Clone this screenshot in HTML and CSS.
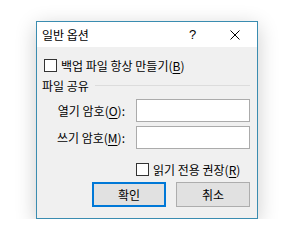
FILE: index.html
```html
<!DOCTYPE html>
<html>
<head>
    <meta charset="UTF-8">
    <title>일반 옵션</title>
    <link rel="stylesheet" href="styles.css">
</head>
<body>
<div class="dialog">
    <div class="title-bar">
        <span class="title">일반 옵션</span>
        <span class="help">?</span>
        <svg class="close" width="10" height="10" viewBox="0 0 10 10">
            <path d="M0.5 0.5 L9.5 9.5 M9.5 0.5 L0.5 9.5" stroke="#000" stroke-width="1" fill="none"/>
        </svg>
    </div>
    <div class="dialog-body">
        <label class="check-row">
            <span class="checkbox"></span>
            <span>백업 파일 항상 만들기(<u>B</u>)</span>
        </label>
        <div class="group-title">
            <span>파일 공유</span>
            <span class="group-line"></span>
        </div>
        <div class="field-row first-field">
            <span class="field-label">열기 암호(<u>O</u>):</span>
            <span class="text-box"></span>
        </div>
        <div class="field-row">
            <span class="field-label">쓰기 암호(<u>M</u>):</span>
            <span class="text-box"></span>
        </div>
        <label class="check-row readonly-row">
            <span class="checkbox"></span>
            <span>읽기 전용 권장(<u>R</u>)</span>
        </label>
        <div class="button-row">
            <button class="dlg-button default" type="button">확인</button>
            <button class="dlg-button" type="button">취소</button>
        </div>
    </div>
</div>
</body>
</html>
```
FILE: styles.css
```css
/* Page */
body {
    margin: 0;
    padding: 21px 0 0 36px;
    background-color: #fff;
    font-family: "Noto Sans CJK KR", "Noto Sans", sans-serif;
    font-size: 12px;
    color: #000;
}

/* Dialog window */
.dialog {
    box-sizing: border-box;
    width: 222px;
    height: 198px;
    border: 1px solid #3a8cb0;
    background-color: #f0f0f0;
    box-shadow: 0 5px 20px rgba(0, 0, 0, 0.2);
}

/* Title bar */
.title-bar {
    display: flex;
    align-items: center;
    height: 25px;
    background-color: #fff;
    padding-left: 5px;
}

.title {
    flex: 1;
}

.help {
    width: 12px;
    margin-right: 29px;
    font-family: "Liberation Sans", sans-serif;
    font-size: 13px;
}

.close {
    margin-right: 17px;
}

/* Body of the dialog */
.dialog-body {
    padding: 10px 7px 0 7px;
}

u {
    text-decoration-thickness: 1px;
    text-underline-offset: 2px;
}

/* Checkboxes */
.check-row {
    display: flex;
    align-items: center;
    gap: 4px;
    height: 16px;
}

.checkbox {
    box-sizing: border-box;
    width: 13px;
    height: 13px;
    border: 1px solid #333;
    background-color: #fff;
}

/* Group header */
.group-title {
    display: flex;
    align-items: center;
    gap: 6px;
    margin: 3px 0 0 -2px;
    height: 18px;
}

.group-line {
    flex: 1;
    height: 1px;
    background-color: #dcdcdc;
}

/* Password fields */
.field-row {
    display: flex;
    align-items: center;
    justify-content: flex-end;
    gap: 11px;
    margin-top: 4px;
}

.field-row.first-field {
    margin-top: 5px;
}

.field-label {
    white-space: nowrap;
}

.text-box {
    box-sizing: border-box;
    width: 114px;
    height: 23px;
    border: 1px solid #ababab;
    background-color: #fff;
}

/* Read-only checkbox */
.readonly-row {
    margin-top: 12px;
    margin-left: 92px;
}

/* Buttons */
.button-row {
    display: flex;
    justify-content: flex-end;
    gap: 10px;
    margin-top: 5px;
}

.dlg-button {
    box-sizing: border-box;
    width: 74px;
    height: 25px;
    padding: 0;
    border: 1px solid #adadad;
    background-color: #e1e1e1;
    font-family: inherit;
    font-size: 12px;
    color: #000;
}

.dlg-button.default {
    border: 2px solid #0078d7;
}
```
